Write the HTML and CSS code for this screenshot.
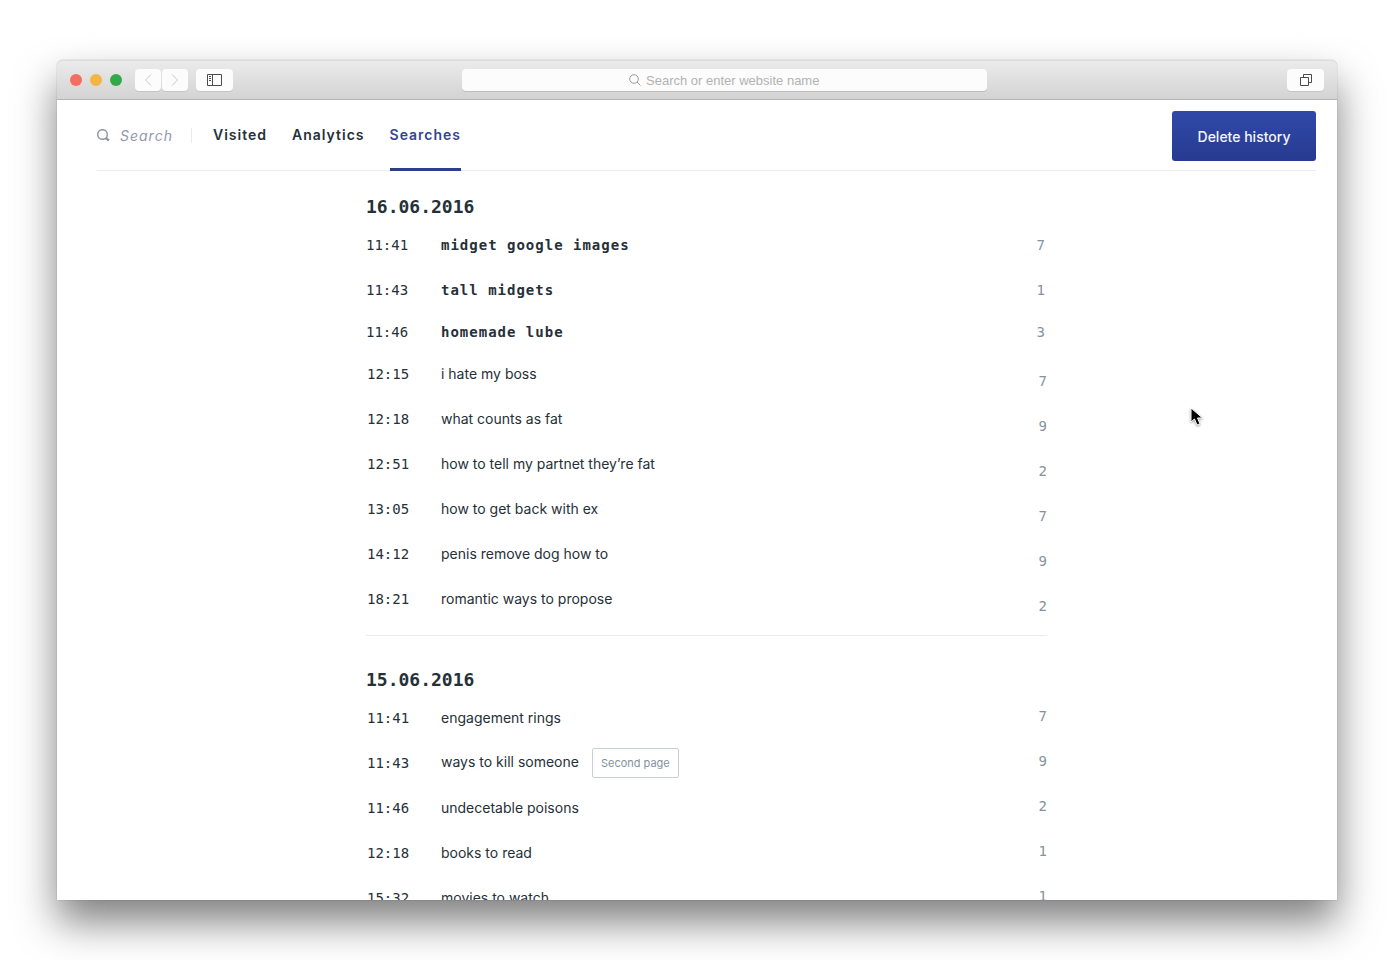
FILE: index.html
```html
<!DOCTYPE html>
<html lang="en">
  <head>
    <meta charset="UTF-8" />
    <meta name="viewport" content="width=device-width, initial-scale=1.0" />
    <title>Searches</title>
    <link rel="stylesheet" href="styles.css">
  </head>
  <body>
    <div class="window">
      <header class="titlebar">
        <div class="lights">
          <button class="light red" aria-label="Close"></button>
          <button class="light yellow" aria-label="Minimize"></button>
          <button class="light green" aria-label="Zoom"></button>
        </div>
        <div class="history">
          <button class="tool small" aria-label="Back">
            <svg width="8" height="14" viewBox="0 0 8 14"><path d="M7 1.5L1.5 7L7 12.5" /></svg>
          </button>
          <button class="tool small" aria-label="Forward">
            <svg width="8" height="14" viewBox="0 0 8 14"><path d="M1 1.5L6.5 7L1 12.5" /></svg>
          </button>
        </div>
        <button class="tool" aria-label="Sidebar">
          <svg width="15" height="12" viewBox="0 0 15 12"><path d="M.5 .5h14v11h-14zM5.5 .5v11M2 2.5h2M2 4.5h2M2 6.5h2" /></svg>
        </button>
        <label class="address">
          <svg width="12" height="12" viewBox="0 0 12 12"><circle cx="5" cy="5" r="4.3" /><path d="M8 8l3.5 3.5" /></svg>
          <input type="text" aria-label="Address" placeholder="Search or enter website name" />
        </label>
        <button class="tool" aria-label="Tabs">
          <svg width="12" height="12" viewBox="0 0 12 12"><path d="M.5 3.5h8v8h-8zM3.5 3.5v-3h8v8h-3" /></svg>
        </button>
      </header>

      <main class="page">
        <nav class="nav">
          <label class="search">
            <svg width="13" height="13" viewBox="0 0 13 13"><circle cx="5.5" cy="5.5" r="4.8" /><path class="handle" d="M8.5 9l3.5 2.5" /></svg>
            <input type="text" aria-label="Search" placeholder="Search" />
          </label>
          <a class="tab" href="#">Visited</a>
          <a class="tab" href="#">Analytics</a>
          <a class="tab active" href="#">Searches</a>
          <button class="delete">Delete history</button>
        </nav>

        <section class="day">
          <h2>16.06.2016</h2>
          <table>
            <tbody class="moving">
              <tr><td class="time">11:41</td><td>midget google images</td><td class="count">7</td></tr>
              <tr><td class="time">11:43</td><td>tall midgets</td><td class="count">1</td></tr>
              <tr><td class="time">11:46</td><td>homemade lube</td><td class="count">3</td></tr>
            </tbody>
            <tbody class="lowered">
              <tr><td class="time">12:15</td><td>i hate my boss</td><td class="count">7</td></tr>
              <tr><td class="time">12:18</td><td>what counts as fat</td><td class="count">9</td></tr>
              <tr><td class="time">12:51</td><td>how to tell my partnet they’re fat</td><td class="count">2</td></tr>
              <tr><td class="time">13:05</td><td>how to get back with ex</td><td class="count">7</td></tr>
              <tr><td class="time">14:12</td><td>penis remove dog how to</td><td class="count">9</td></tr>
              <tr><td class="time">18:21</td><td>romantic ways to propose</td><td class="count">2</td></tr>
            </tbody>
          </table>
        </section>

        <section class="day">
          <h2>15.06.2016</h2>
          <table>
            <tbody class="raised">
              <tr><td class="time">11:41</td><td>engagement rings</td><td class="count">7</td></tr>
              <tr><td class="time">11:43</td><td>ways to kill someone<button class="badge">Second page</button></td><td class="count">9</td></tr>
              <tr><td class="time">11:46</td><td>undecetable poisons</td><td class="count">2</td></tr>
              <tr><td class="time">12:18</td><td>books to read</td><td class="count">1</td></tr>
              <tr><td class="time">15:32</td><td>movies to watch</td><td class="count">1</td></tr>
            </tbody>
          </table>
        </section>
      </main>
    </div>
    <svg class="cursor" width="14" height="20" viewBox="0 0 14 20"><path d="M1 1v14l3.5-3 2.5 6 3-1.2-2.5-5.800h5z" /></svg>
  </body>
</html>
```
FILE: styles.css
```css
* {
  margin: 0;
  padding: 0;
  box-sizing: border-box;
}
body {
  height: 100vh;
  padding: 60px 61px 60px 57px;
  overflow: hidden;
  background: #fff;
  color: #263038;
  font-family: Inter, "Liberation Sans", sans-serif;
  font-size: 14px;
}
button {
  border: 0;
  font-family: inherit;
  cursor: pointer;
}
input {
  border: 0;
  outline: 0;
  background: none;
  font-family: inherit;
}
.window {
  height: 100%;
  overflow: hidden;
  background: #fff;
  border-radius: 6px 6px 0 0;
  box-shadow: 0 0 1px rgba(0, 0, 0, 0.5), 0 22px 40px rgba(0, 0, 0, 0.5);
}

/* browser bar */
.titlebar {
  display: flex;
  align-items: center;
  height: 40px;
  padding: 0 13px;
  background: linear-gradient(#ebebeb, #d3d3d3);
  border-top: 1px solid #dcdcdc;
  border-bottom: 1px solid #b4b4b4;
  border-radius: 6px 6px 0 0;
}
.lights {
  display: flex;
  gap: 8px;
}
.light {
  width: 12px;
  height: 12px;
  border-radius: 50%;
}
.red {
  background: #f46d5e;
}
.yellow {
  background: #f5b544;
}
.green {
  background: #34a94c;
}
.history {
  display: flex;
  gap: 1px;
  margin: 0 8px 0 13px;
}
.tool {
  display: flex;
  align-items: center;
  justify-content: center;
  width: 37px;
  height: 22px;
  background: #fcfcfc;
  border-radius: 4px;
  box-shadow: 0 1px 0 #c4c4c4;
}
.tool.small {
  width: 26px;
}
.tool svg {
  fill: none;
  stroke: #4a4a4a;
}
.tool.small svg {
  stroke: #c8c8c8;
}
.address {
  display: flex;
  flex: 1;
  align-items: center;
  justify-content: center;
  gap: 5px;
  height: 22px;
  margin: 0 300px 0 229px;
  background: #fcfcfc;
  border-radius: 4px;
  box-shadow: 0 1px 0 #bdbdbd;
}
.address svg {
  fill: none;
  stroke: #9a9a9a;
}
.address input {
  width: 174px;
  font-family: "Liberation Sans", Arial, sans-serif;
  font-size: 13px;
}
.address input::placeholder {
  color: #b2b2b2;
}

/* page menu */
.page {
  padding: 0 21px 0 40px;
}
.nav {
  display: flex;
  align-items: center;
  gap: 25px;
  height: 71px;
  border-bottom: 1px solid #ececef;
}
.search {
  display: flex;
  align-items: center;
  gap: 10px;
  width: 95px;
  height: 15px;
  margin-right: -4px;
  border-right: 1px solid #e9ebee;
}
.search svg {
  flex: none;
  fill: none;
  stroke: #9298a8;
  stroke-width: 1.5;
}
.search .handle {
  stroke-width: 2.5;
}
.search input {
  width: 64px;
  font-size: 14px;
  font-style: italic;
  letter-spacing: 1px;
}
.search input::placeholder {
  color: #9298a8;
}
.tab {
  height: 71px;
  line-height: 70px;
  color: #263038;
  font-weight: 600;
  letter-spacing: 1px;
  text-decoration: none;
}
.tab.active {
  color: #34458f;
  border-bottom: 3px solid #2d3f87;
}
.delete {
  width: 144px;
  height: 50px;
  margin: 2px 0 0 auto;
  background: linear-gradient(#3049a8, #273a90);
  border-radius: 3px;
  color: #f4f5fc;
  font-size: 14px;
  font-weight: 500;
}

/* search list */
.day {
  max-width: 681px;
  margin: 0 auto;
  padding: 24px 0 14px;
}
.day + .day {
  padding-top: 32px;
  border-top: 1px solid #e9ebec;
}
.day h2 {
  height: 27px;
  font-family: "DejaVu Sans Mono", monospace;
  font-size: 18px;
  line-height: 24px;
}
table {
  width: 100%;
  border-collapse: collapse;
}
td {
  height: 45px;
}
.time {
  width: 75px;
  padding-left: 1px;
  font-family: "DejaVu Sans Mono", monospace;
}
.count {
  width: 40px;
  color: #84929c;
  font-family: "DejaVu Sans Mono", monospace;
  text-align: right;
}
.moving td {
  font-family: "DejaVu Sans Mono", monospace;
}
.moving td:nth-child(2) {
  font-weight: bold;
  letter-spacing: 1px;
}
.moving .time {
  padding-left: 0;
}
.moving .count {
  padding-right: 2px;
}
.moving tr:last-child td {
  height: 39px;
}
.lowered .count {
  padding-top: 14px;
}
.raised .count {
  padding-bottom: 4px;
}
.badge {
  height: 30px;
  margin-left: 13px;
  padding: 0 8px;
  background: #fff;
  border: 1px solid #c9d0d6;
  border-radius: 2px;
  color: #84929c;
  font-size: 11px;
  vertical-align: middle;
}

/* mouse pointer over the page */
.cursor {
  position: absolute;
  left: 1190px;
  top: 407px;
  fill: #000;
  stroke: #fff;
  filter: drop-shadow(0 1px 1px rgba(0, 0, 0, 0.4));
}
```
